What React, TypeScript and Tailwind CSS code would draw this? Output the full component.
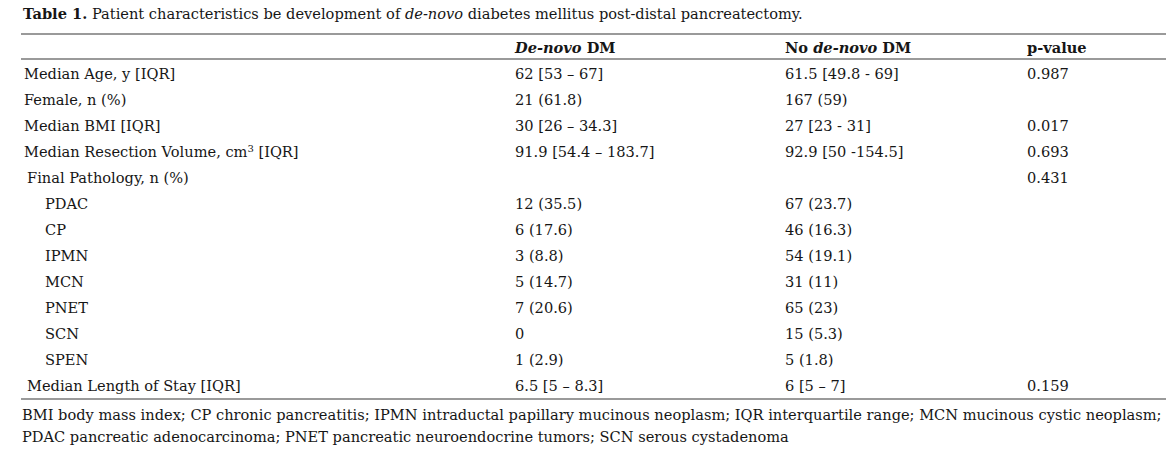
const rows: { label: React.ReactNode; a: string; b: string; p: string; indent?: "sub" | "small" }[] = [
  { label: "Median Age, y [IQR]", a: "62 [53 – 67]", b: "61.5 [49.8 - 69]", p: "0.987" },
  { label: "Female, n (%)", a: "21 (61.8)", b: "167 (59)", p: "" },
  { label: "Median BMI [IQR]", a: "30 [26 – 34.3]", b: "27 [23 - 31]", p: "0.017" },
  {
    label: (
      <>
        Median Resection Volume, cm<sup className="text-[10px]">3</sup> [IQR]
      </>
    ),
    a: "91.9 [54.4 – 183.7]",
    b: "92.9 [50 -154.5]",
    p: "0.693",
  },
  { label: "Final Pathology, n (%)", a: "", b: "", p: "0.431", indent: "small" },
  { label: "PDAC", a: "12 (35.5)", b: "67 (23.7)", p: "", indent: "sub" },
  { label: "CP", a: "6 (17.6)", b: "46 (16.3)", p: "", indent: "sub" },
  { label: "IPMN", a: "3 (8.8)", b: "54 (19.1)", p: "", indent: "sub" },
  { label: "MCN", a: "5 (14.7)", b: "31 (11)", p: "", indent: "sub" },
  { label: "PNET", a: "7 (20.6)", b: "65 (23)", p: "", indent: "sub" },
  { label: "SCN", a: "0", b: "15 (5.3)", p: "", indent: "sub" },
  { label: "SPEN", a: "1 (2.9)", b: "5 (1.8)", p: "", indent: "sub" },
  { label: "Median Length of Stay [IQR]", a: "6.5 [5 – 8.3]", b: "6 [5 – 7]", p: "0.159", indent: "small" },
];

const cols = "grid grid-cols-[491px_270px_242px_1fr]";

export default function App() {
  return (
    <div className="w-[1174px] h-[465px] bg-white text-[#161616] px-[21px] pt-[3px] text-[14.6px] font-['DejaVu_Serif',serif]">
      <p className="leading-[22px] ml-[2px]">
        <b>Table 1.</b> Patient characteristics be development of <i>de-novo</i> diabetes mellitus
        post-distal pancreatectomy.
      </p>
      <div className="mt-[8px] w-[1145px] border-t-2 border-b-2 border-[#9a9a9a]">
        <div className={`${cols} h-[25px] items-center pt-[2px] font-bold border-b-2 border-[#9a9a9a]`}>
          <div />
          <div className="pl-[3px]">
            <i>De-novo</i> DM
          </div>
          <div className="pl-[3px]">
            No <i>de-novo</i> DM
          </div>
          <div className="pl-[3px]">p-value</div>
        </div>
        {rows.map((r, i) => (
          <div key={i} className={`${cols} h-[26px] items-center pt-[2px]`}>
            <div
              className={
                r.indent === "sub" ? "pl-[24px]" : r.indent === "small" ? "pl-[6px]" : "pl-[3px]"
              }
            >
              {r.label}
            </div>
            <div className="pl-[3px]">{r.a}</div>
            <div className="pl-[3px]">{r.b}</div>
            <div className="pl-[3px]">{r.p}</div>
          </div>
        ))}
      </div>
      <p className="leading-[22px] mt-[4px] ml-[1px] whitespace-nowrap">
        BMI body mass index; CP chronic pancreatitis; IPMN intraductal papillary mucinous neoplasm; IQR
        interquartile range; MCN mucinous cystic neoplasm;
        <br />
        PDAC pancreatic adenocarcinoma; PNET pancreatic neuroendocrine tumors; SCN serous cystadenoma
      </p>
    </div>
  );
}
